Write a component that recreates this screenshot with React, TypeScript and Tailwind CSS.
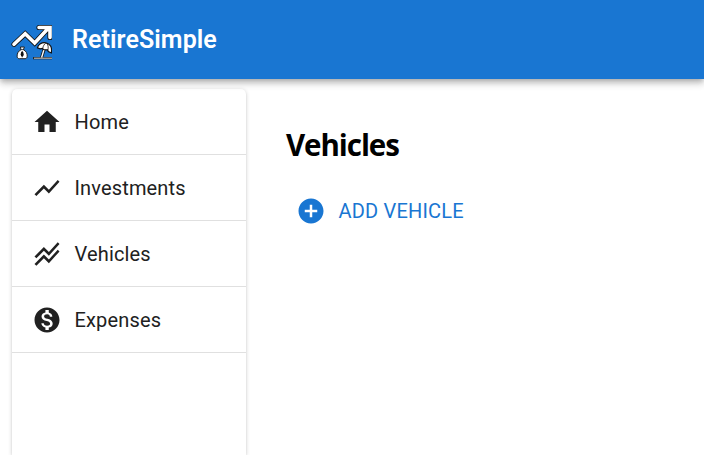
const icons = {
  home: 'M10 20v-6h4v6h5v-8h3L12 3 2 12h3v8z',
  chart: 'm3.5 18.49 6-6.01 4 4L22 6.92l-1.41-1.41-7.09 7.97-4-4L2 16.99z',
  stacked:
    'm2 19.99 7.5-7.51 4 4 7.09-7.97L22 9.92l-8.5 9.56-4-4-6 6.01-1.5-1.5zm1.5-4.5 6-6.01 4 4L22 3.92l-1.41-1.41-7.09 7.97-4-4L2 13.99l1.5 1.5z',
  money:
    'M12 2C6.48 2 2 6.48 2 12s4.48 10 10 10 10-4.48 10-10S17.52 2 12 2zm1.41 16.09V20h-2.67v-1.93c-1.71-.36-3.16-1.46-3.27-3.4h1.96c.1 1.05.82 1.87 2.65 1.87 1.96 0 2.4-.98 2.4-1.59 0-.83-.44-1.61-2.67-2.14-2.48-.6-4.18-1.62-4.18-3.67 0-1.72 1.39-2.84 3.11-3.21V4h2.67v1.95c1.86.45 2.79 1.86 2.85 3.39H14.3c-.05-1.11-.64-1.87-2.22-1.87-1.5 0-2.4.68-2.4 1.64 0 .84.65 1.39 2.67 1.91s4.18 1.39 4.18 3.91c-.01 1.83-1.38 2.83-3.12 3.16z',
  add: 'M12 2C6.48 2 2 6.48 2 12s4.48 10 10 10 10-4.48 10-10S17.52 2 12 2zm5 11h-4v4h-2v-4H7v-2h4V7h2v4h4v2z',
};

function Icon({ path }: { path: string }) {
  return (
    <svg viewBox="0 0 24 24" className="size-[30px] shrink-0 fill-current">
      <path d={path} />
    </svg>
  );
}

function Logo() {
  const arrow = 'M4 25.3 15.2 14.8 24.7 24 38.5 9M29 8.5H40V18.5';
  return (
    <svg viewBox="0 0 42 41" className="h-[41px] w-[42px] shrink-0" fill="none">
      <path d={arrow} stroke="#111" strokeWidth="5.2" strokeLinecap="round" />
      <path d={arrow} stroke="#fff" strokeWidth="3.6" strokeLinecap="round" />
      <path d="M10.4 28h4l-1 2.7c2.6 1.2 4 3.6 3.8 6.5-.1 1.7-.8 2.5-2.2 2.5H9.3c-1.4 0-2.1-.8-2.2-2.5-.1-2.9 1.4-5.3 3.9-6.5z" fill="#fff" stroke="#222" />
      <path d="M10.6 30.6h3.6" stroke="#222" strokeWidth=".8" />
      <ellipse cx="12.2" cy="35.2" rx="1.5" ry="2.4" fill="#111" />
      <path d="M12.2 32v6.3" stroke="#111" strokeWidth=".9" />
      <path d="m34.8 28-3.2 10.5" stroke="#111" strokeWidth="3" />
      <path d="M23 39.2h19" stroke="#222" strokeWidth="2.2" />
      <path d="M24 39.2h18" stroke="#ccc" strokeWidth="1" />
      <path d="m34.8 28-3.2 10.5" stroke="#fff" strokeWidth="1.4" />
      <path d="M27.4 28.8c.8-3.4 4.4-5.8 8.4-5 4.4.8 6.6 4.5 5.5 10.2l-3-1.4-.8-1.8-3.6-.2-1.6-1.3-2.2.5z" fill="#fff" stroke="#111" strokeWidth="1.2" />
      <path d="M35.8 24c-1.7 1.4-2.7 3.1-3 5.3M37 24.3c1.3 2.1 1.5 4.6.8 7" stroke="#111" strokeWidth=".8" />
    </svg>
  );
}

const items = [
  { label: 'Home', path: icons.home },
  { label: 'Investments', path: icons.chart },
  { label: 'Vehicles', path: icons.stacked },
  { label: 'Expenses', path: icons.money },
];

export default function App() {
  return (
    <div className="flex h-[455px] w-[704px] flex-col overflow-hidden bg-white font-['Roboto',sans-serif] text-[#212121]">
      <header className="z-10 flex h-[79px] shrink-0 items-center bg-[#1976d2] pl-[10px] text-white shadow-[0_2px_5px_-1px_rgba(0,0,0,.2),0_5px_6px_0_rgba(0,0,0,.14),0_1px_12px_0_rgba(0,0,0,.12)]">
        <Logo />
        <h1 className="ml-5 text-[25px] leading-[30px] font-semibold tracking-[0.08px]">RetireSimple</h1>
      </header>
      <div className="flex min-h-0 flex-1">
        <nav className="mt-[10px] ml-3 w-[234px] shrink-0 rounded-t-[5px] bg-white shadow-[0_2px_1px_-1px_rgba(0,0,0,.2),0_1px_1px_0_rgba(0,0,0,.14),0_1px_4px_0_rgba(0,0,0,.2)]">
          {items.map((item) => (
            <a key={item.label} className="flex h-[66px] items-center border-b border-[#e0e0e0] pl-5">
              <Icon path={item.path} />
              <span className="ml-[12.5px] text-[20px] leading-[30px] tracking-[0.15px]">{item.label}</span>
            </a>
          ))}
        </nav>
        <main className="pt-[46px] pl-10">
          <h2 className="font-['Open_Sans',sans-serif] text-[29.5px] leading-[40px] font-bold tracking-[-1.05px] text-black">Vehicles</h2>
          <button className="mt-[31px] flex items-center pl-[10px] text-[#1976d2]">
            <Icon path={icons.add} />
            <span className="ml-[12.5px] text-[20px] leading-[30px] tracking-[0.1875px]">ADD VEHICLE</span>
          </button>
        </main>
      </div>
    </div>
  );
}
